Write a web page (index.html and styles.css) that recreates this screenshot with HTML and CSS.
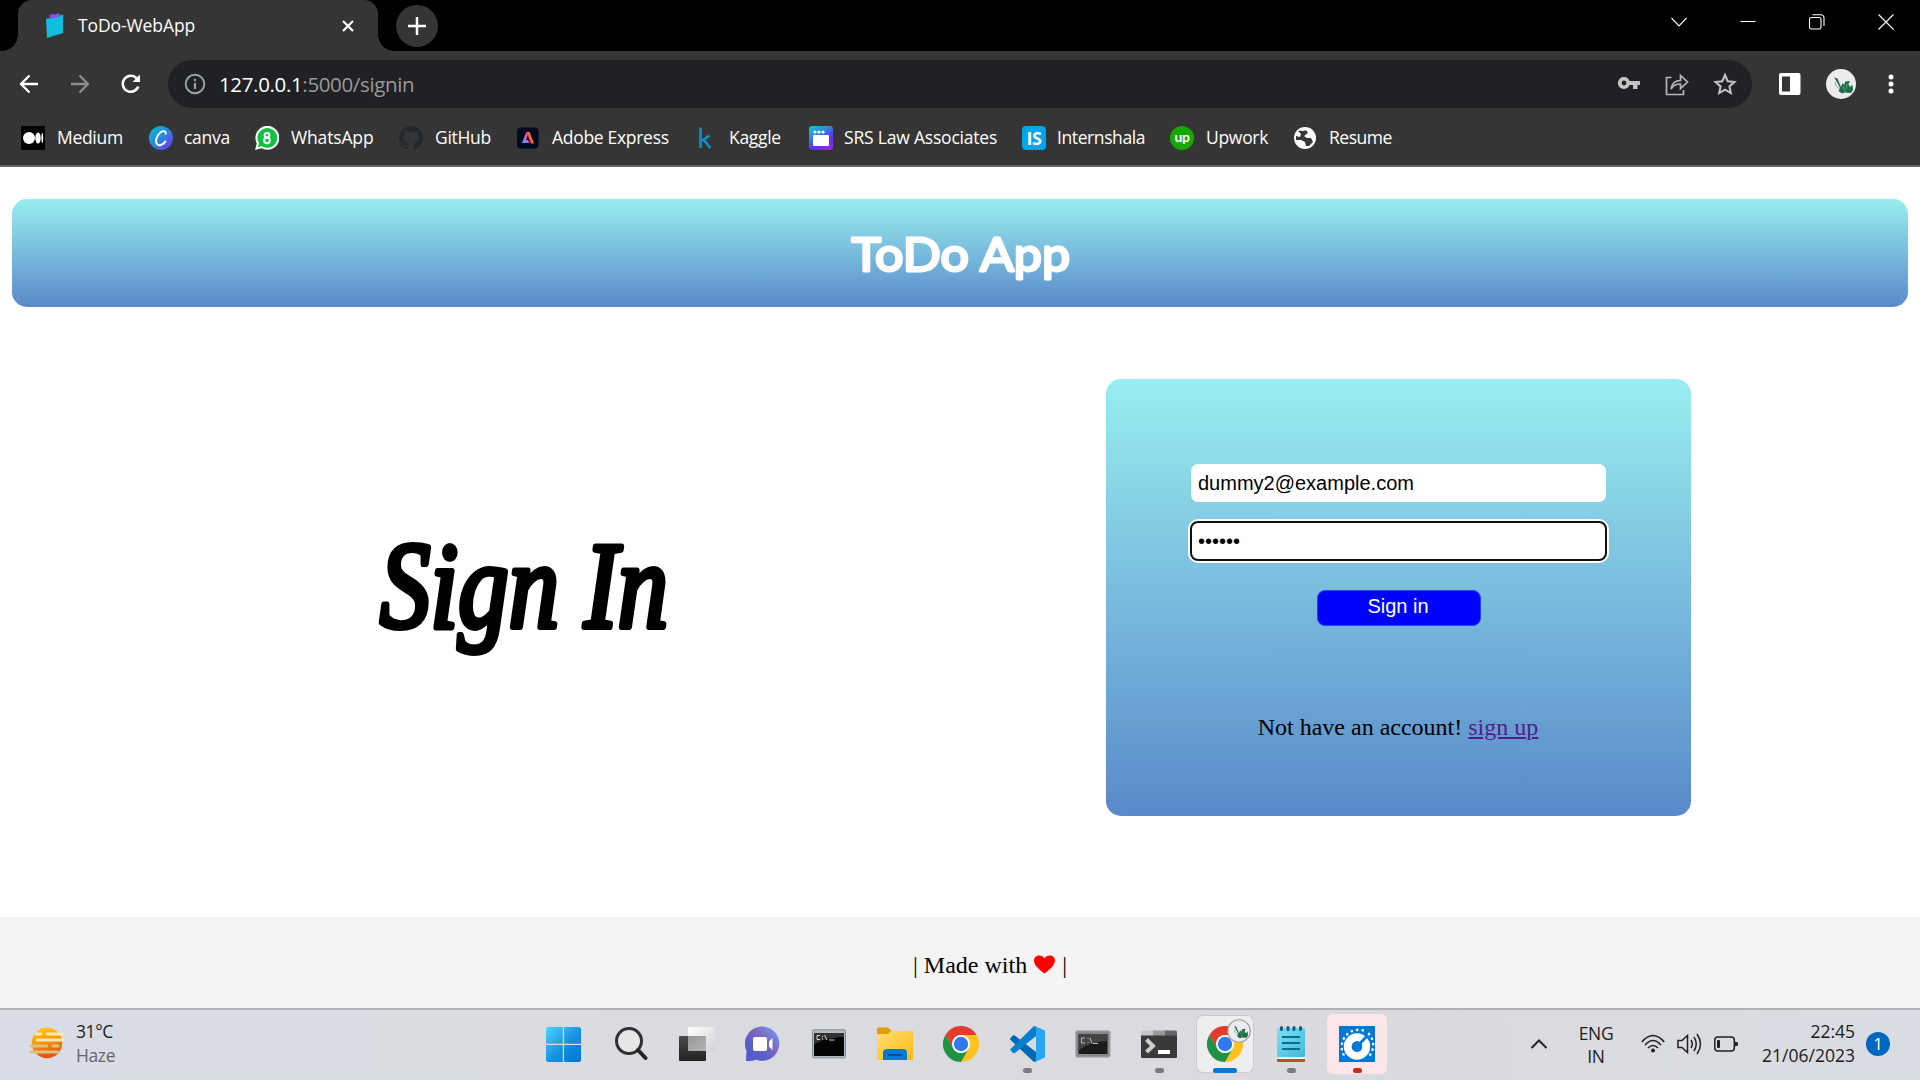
FILE: index.html
```html
<!DOCTYPE html>
<html lang="en">
<head>
<meta charset="utf-8">
<title>ToDo-WebApp</title>
<link rel="stylesheet" href="styles.css">
</head>
<body>
<svg class="defs" width="0" height="0" aria-hidden="true">
  <defs>
    <linearGradient id="canvaG" x1="0" y1="0" x2="1" y2="1"><stop offset="0" stop-color="#00c4cc"/><stop offset=".5" stop-color="#2b85dc"/><stop offset="1" stop-color="#7d2ae8"/></linearGradient>
    <linearGradient id="siteG" x1="0" y1="0" x2=".6" y2="1"><stop offset="0" stop-color="#00d0c8"/><stop offset=".5" stop-color="#3f72e0"/><stop offset=".75" stop-color="#5b31f4"/><stop offset="1" stop-color="#8a2be2"/></linearGradient>
    <linearGradient id="adobeG" x1="0" y1="1" x2="1" y2="0.6"><stop offset="0" stop-color="#3aa8ff"/><stop offset=".4" stop-color="#b06cf0"/><stop offset=".7" stop-color="#ff4040"/><stop offset="1" stop-color="#ffd000"/></linearGradient>
    <linearGradient id="winG" gradientUnits="userSpaceOnUse" x1="0" y1="0" x2="35" y2="35"><stop offset="0" stop-color="#4fd4ff"/><stop offset=".55" stop-color="#1590e2"/><stop offset="1" stop-color="#0074d0"/></linearGradient>
    <linearGradient id="hazeG" x1="0" y1="0" x2=".3" y2="1"><stop offset="0" stop-color="#ffd400"/><stop offset=".5" stop-color="#f99a06"/><stop offset="1" stop-color="#e2560c"/></linearGradient>
    <linearGradient id="chatG" x1="0" y1="1" x2="1" y2="0"><stop offset="0" stop-color="#5059c9"/><stop offset=".35" stop-color="#5b5fc7"/><stop offset=".6" stop-color="#7b68c0"/><stop offset="1" stop-color="#6fa4ff"/></linearGradient>
    <linearGradient id="foldG" x1="0" y1="0" x2="1" y2="1"><stop offset="0" stop-color="#ffdf70"/><stop offset="1" stop-color="#fdb913"/></linearGradient>
    <linearGradient id="noteG" x1="0" y1="0" x2="1" y2="1"><stop offset="0" stop-color="#7fe0f5"/><stop offset="1" stop-color="#3fb8d8"/></linearGradient>
    <linearGradient id="darkG" x1="0" y1="0" x2="0" y2="1"><stop offset="0" stop-color="#4a4a4a"/><stop offset="1" stop-color="#222"/></linearGradient>
    <linearGradient id="sheetG" x1="0" y1="0" x2="1" y2="1"><stop offset="0" stop-color="#fff"/><stop offset="1" stop-color="#d2d2d4"/></linearGradient>
    <linearGradient id="glassG" x1="0" y1="0" x2="1" y2="1"><stop offset="0" stop-color="#777"/><stop offset="1" stop-color="#a8a8a8"/></linearGradient>
    <symbol id="chrome" viewBox="0 0 36 36">
      <path d="M2.4 9A18 18 0 0 1 33.6 9H18a9 9 0 0 0-7.8 4.5L10.2 22.500Z" fill="#e33b2e"/>
      <path d="M33.6 9A18 18 0 0 1 18 36L25.800 22.500A9 9 0 0 0 18 9Z" fill="#fcc31e"/>
      <path d="M2.400 9A18 18 0 0 0 18 36L25.800 22.500A9 9 0 0 1 10.200 22.500Z" fill="#1f9344"/>
      <circle cx="18" cy="18" r="9" fill="#fff"/><circle cx="18" cy="18" r="7.200" fill="#2f7bee"/>
    </symbol>
    <symbol id="dragon" viewBox="0 0 30 30">
      <circle cx="15" cy="15" r="15" fill="#ececec"/>
      <path d="M8 8.500 11.500 9.500 15 18 16.500 14 18.500 16 19 12.500 24 12 22.500 15 24 18 26.500 15.500 27 21 25 24 19 23.500 16 24.500 12.500 22 14 19 10.500 12Z" fill="#226b48"/>
      <path d="M9 15l2 3 3 2M10 12l-1 4" stroke="#8fa59a" fill="none"/>
      <path d="M17 17l2 6M21 15l-1 5" stroke="#49a57c" fill="none"/>
    </symbol>
  </defs>
</svg>

<div class="tabstrip">
  <div class="tab">
    <svg class="tab-icon" width="20" height="26" viewBox="0 0 20 26"><path d="M1 6 18 1.500V20L2 25Z" fill="#10bfe0"/><path d="M4 2.500 7 1 10 1.500 14 0 15 3.500 5 6Z" fill="#8a4de8"/></svg>
    <span class="tab-title">ToDo-WebApp</span>
    <svg class="tab-close" width="12" height="12" viewBox="0 0 12 12"><path d="M1 1 11 11M11 1 1 11" stroke="#fff" stroke-width="2.200"/></svg>
  </div>
  <div class="newtab"><svg width="18" height="18" viewBox="0 0 18 18"><path d="M9 0V18M0 9H18" stroke="#fff" stroke-width="2.500"/></svg></div>
  <div class="window-controls">
    <svg width="16" height="16" viewBox="0 0 16 16"><path d="M.5 4 8 12 15.500 4"/></svg>
    <svg width="16" height="16" viewBox="0 0 16 16"><path d="M.5 7.500H15.500"/></svg>
    <svg width="16" height="16" viewBox="0 0 16 16"><rect x=".5" y="3.500" width="11.500" height="11.500" rx="1.800"/><path d="M3.500 .8H12a3 3 0 0 1 3 3V12"/></svg>
    <svg width="16" height="16" viewBox="0 0 16 16"><path d="M.5 .5 15.500 15.500M15.500 .5 .5 15.500"/></svg>
  </div>
</div>

<div class="toolbar">
  <div class="nav">
    <svg width="20" height="20" viewBox="0 0 20 20"><path d="M19 10H2M10.500 1.500 2 10 10.500 18.500" stroke="#fff"/></svg>
    <svg width="20" height="20" viewBox="0 0 20 20"><path d="M1 10H18M9.500 1.500 18 10 9.500 18.500" stroke="#8c8c8c"/></svg>
    <svg width="20" height="20" viewBox="0 0 20 20"><path d="M17.300 12.500A8 8 0 1 1 15.800 4.500L18 6.800" stroke="#fff" stroke-width="2.500"/><path d="M19 .5V8H11.500Z" fill="#fff"/></svg>
  </div>
  <div class="address">
    <svg width="22" height="22" viewBox="0 0 22 22"><circle cx="11" cy="11" r="9.300" fill="none" stroke="#9aa0a6" stroke-width="2"/><path d="M11 10V16M11 5.800V8.200" stroke="#9aa0a6" stroke-width="2.200"/></svg>
    <span class="url">127.0.0.1<span class="url-rest">:5000/signin</span></span>
    <div class="address-actions">
      <svg width="24" height="24" viewBox="0 0 24 24"><path d="M7 5a6 6 0 1 0 5.500 8H16v4h4.500v-4H23V9H12.500A6 6 0 0 0 7 5Zm0 3.600a2.400 2.400 0 1 1 0 4.800 2.400 2.400 0 0 1 0-4.800Z" fill="#c4c4c4"/></svg>
      <svg width="24" height="24" viewBox="0 0 24 24"><path d="M6.500 5.500H1.500V22.500H18.500V18M6 17C7 11 10 8.500 15.500 8.500V3.500L22.500 10 15.500 16.500V12C11 12 8.500 13 6 17Z" fill="none" stroke="#b4b4b4" stroke-width="1.700"/></svg>
      <svg width="24" height="24" viewBox="0 0 24 24"><path d="M12 3 14.700 9.200 21.500 9.900 16.400 14.400 17.800 21 12 17.600 6.200 21 7.600 14.400 2.500 9.900 9.300 9.200Z" fill="none" stroke="#c4c4c4" stroke-width="2"/></svg>
    </div>
  </div>
  <div class="toolbar-actions">
    <svg width="22" height="22" viewBox="0 0 22 22"><rect width="21.500" height="22" rx="2" fill="#fff"/><rect x="3" y="3.500" width="8" height="15" fill="#353535"/></svg>
    <svg width="30" height="30"><use href="#dragon"/></svg>
    <svg width="6" height="20" viewBox="0 0 6 20"><circle cx="3" cy="3" r="2.500" fill="#fff"/><circle cx="3" cy="10" r="2.500" fill="#fff"/><circle cx="3" cy="17" r="2.500" fill="#fff"/></svg>
  </div>
</div>

<div class="bookmarks">
  <div class="bm bm-medium"><svg viewBox="0 0 24 24"><rect width="24" height="24" rx="1" fill="#000"/><circle cx="8" cy="12" r="6" fill="#fff"/><ellipse cx="17" cy="12" rx="2.700" ry="5.500" fill="#fff"/><ellipse cx="21.300" cy="12" rx=".9" ry="5" fill="#fff"/></svg><span>Medium</span></div>
  <div class="bm bm-canva"><svg viewBox="0 0 24 24"><circle cx="12" cy="12" r="12" fill="url(#canvaG)"/><path d="M16.500 8.500C18 4.500 13 3.500 9.500 8.500 5 15 7.500 20 11.500 19 14 18.500 15.500 17 16.800 14.800" fill="none" stroke="#fff" stroke-width="1.900"/></svg><span>canva</span></div>
  <div class="bm bm-whatsapp"><svg viewBox="0 0 24 24"><path d="M0 24 1.800 17.500A12 12 0 1 1 6.500 22.300Z" fill="#fff"/><path d="M2.800 21.300 4 17.200A9.900 9.900 0 1 1 7 20.200Z" fill="#12c143"/><circle cx="12" cy="9.300" r="2.400" fill="none" stroke="#fff" stroke-width="2"/><circle cx="12" cy="14.400" r="2.800" fill="none" stroke="#fff" stroke-width="2"/></svg><span>WhatsApp</span></div>
  <div class="bm bm-github"><svg viewBox="0 0 16 16"><path fill="#24292e" d="M8 0C3.580 0 0 3.580 0 8c0 3.540 2.290 6.530 5.470 7.590.4.070.55-.17.55-.38 0-.19-.01-.82-.01-1.490-2.010.37-2.530-.49-2.690-.94-.09-.23-.48-.94-.82-1.130-.28-.15-.68-.52-.01-.53.63-.01 1.080.58 1.230.82.72 1.210 1.870.87 2.330.66.07-.52.28-.87.51-1.070-1.780-.2-3.640-.89-3.640-3.950 0-.87.31-1.590.82-2.150-.08-.2-.36-1.020.08-2.120 0 0 .67-.21 2.200.82.64-.18 1.320-.27 2-.27s1.360.09 2 .27c1.530-1.040 2.200-.82 2.200-.82.44 1.100.16 1.920.08 2.120.51.56.82 1.270.82 2.150 0 3.070-1.870 3.750-3.650 3.950.29.25.54.73.54 1.480 0 1.070-.01 1.930-.01 2.200 0 .21.15.46.55.38A8 8 0 0 0 16 8c0-4.420-3.580-8-8-8Z"/></svg><span>GitHub</span></div>
  <div class="bm bm-adobe"><svg viewBox="0 0 24 24"><rect x="1" y="1.500" width="21.500" height="21" rx="4" fill="#000b1d"/><path d="M10.200 6H13.500L18 17.500H14.800L11.800 9.500 10 14H12.200L13.200 17H6Z" fill="url(#adobeG)"/></svg><span>Adobe Express</span></div>
  <div class="bm bm-kaggle"><svg viewBox="0 0 24 24"><path d="M7.500 1.500V22M16.500 9.500 8.500 15M10.500 13.500 17.300 22" fill="none" stroke="#0b8fc4" stroke-width="2.700"/></svg><span>Kaggle</span></div>
  <div class="bm bm-srs"><svg viewBox="0 0 24 24"><rect width="24" height="24" rx="3" fill="url(#siteG)"/><rect x="4" y="9" width="16" height="11" rx="1" fill="#fff"/><circle cx="6" cy="6" r="1.600" fill="#fff"/><circle cx="10" cy="6" r="1.600" fill="#fff"/><circle cx="14" cy="6" r="1.600" fill="#fff"/></svg><span>SRS Law Associates</span></div>
  <div class="bm bm-intern"><div class="is-logo">IS</div><span>Internshala</span></div>
  <div class="bm bm-upwork"><div class="up-logo">up</div><span>Upwork</span></div>
  <div class="bm bm-resume"><svg viewBox="0 0 24 24"><circle cx="12" cy="12" r="11" fill="#fff"/><path d="M5 5C8 4 10 6 13 4L15 7 11 10 14 12 18 12 20 16 16 20 13 20 12 16 8 14 3 14 3 10 7 11 8 8Z" fill="#353535"/></svg><span>Resume</span></div>
</div>

<main class="page">
  <header class="banner">
    <svg width="240" height="100" viewBox="0 0 240 100"><text class="banner-text" x="11.500" y="68" textLength="218.500" lengthAdjust="spacingAndGlyphs">ToDo App</text></svg>
  </header>
  <section class="content">
    <div class="hero">
      <svg width="340" height="260" viewBox="0 0 340 260"><text class="hero-text" x="26" y="160" textLength="288" lengthAdjust="spacingAndGlyphs">Sign In</text></svg>
    </div>
    <form class="card">
      <input class="field" type="text" value="dummy2@example.com">
      <input class="field field-active" type="password" value="secret">
      <button class="submit" type="button">Sign in</button>
      <p class="signup">Not have an account! <a href="#">sign up</a></p>
    </form>
  </section>
  <footer class="footer">
    <span>| Made with</span>
    <svg width="21" height="19" viewBox="0 0 21 19"><path d="M10.500 18.500C6 15 0 10.500 0 5.500 0 0 7.500-1.500 10.500 3.300 13.500-1.500 21 0 21 5.500 21 10.500 15 15 10.500 18.500Z" fill="red"/></svg>
    <span>|</span>
  </footer>
</main>

<div class="taskbar">
  <div class="weather">
    <svg width="36" height="32" viewBox="0 0 36 32"><circle cx="18" cy="16" r="15.200" fill="url(#hazeG)"/><g stroke-width="2.800" stroke-linecap="round"><path d="M7 7H12M18 7H34M8 13H34" stroke="#f7e7b4"/><path d="M2 19H18M24 19H29M2 25H29" stroke="#dfc080"/></g></svg>
    <div class="weather-text"><span>31°C</span><span class="muted">Haze</span></div>
  </div>
  <div class="apps">
    <div class="app app-start"><svg width="35" height="35" viewBox="0 0 35 35"><path d="M1.500 0H16.800V16.800H0V1.500ZM18 0H33.500L35 1.500V16.800H18ZM0 18H16.800V35H1.500L0 33.500ZM18 18H35V33.500L33.500 35H18Z" fill="url(#winG)"/></svg></div>
    <div class="app"><svg width="34" height="36" viewBox="0 0 34 36"><circle cx="15" cy="15" r="12.500" fill="#e6e6e8" stroke="#303030" stroke-width="3"/><path d="M24 24 31.500 32" stroke="#252525" stroke-width="4" stroke-linecap="round"/></svg></div>
    <div class="app"><svg width="36" height="36" viewBox="0 0 36 36"><rect x="0" y="10" width="27" height="25" rx="1" fill="url(#darkG)"/><rect x="9" y="1" width="26.500" height="24" rx="1" fill="url(#sheetG)"/><rect x="9" y="10" width="18" height="15" fill="url(#glassG)" opacity=".75"/></svg></div>
    <div class="app"><svg width="36" height="36" viewBox="0 0 36 36"><path d="M1 35 1.500 25A17.200 17.200 0 1 1 11 33.800Q7 35.500 1 35Z" fill="url(#chatG)"/><rect x="8" y="11" width="14" height="14" rx="2" fill="#fff"/><path d="M24 15.500 27.500 12V24L24 20.500Z" fill="#fff"/></svg></div>
    <div class="app"><svg width="34" height="30" viewBox="0 0 34 30"><rect x=".5" y=".8" width="33" height="28" rx="1.500" fill="#b4bac1" stroke="#858b92"/><rect x="2" y="4" width="30" height="23" fill="#050505"/><path d="M2 16Q10 9 32 8V4H2Z" fill="#333"/><path d="M8 6.500H5V10.500H8M10.500 7V8M10.500 9.500V10.500M12.500 6 15 11M17 11H22.500" fill="none" stroke="#d0d0d0"/></svg></div>
    <div class="app"><svg width="36" height="34" viewBox="0 0 36 34"><path d="M0 2Q0 .5 1.500 .5H11L15 4H36V8H0Z" fill="#df9b08"/><path d="M0 7H11L14 4H35Q36 4 36 5V33H0Z" fill="url(#foldG)"/><path d="M6 33V26Q6 22 10 22H26Q30 22 30 26V33Z" fill="#0878cc"/><path d="M11 28H25" stroke="#064f8c" stroke-width="1.800"/></svg></div>
    <div class="app"><svg width="36" height="36"><use href="#chrome"/></svg></div>
    <div class="app"><svg width="36" height="36" viewBox="0 0 36 36"><path d="M1 12.500 4 9.500Q5 9 6.500 10L27 26V35.500L25 36 1 13.500Z" fill="#0069b4"/><path d="M1 23.500 25 0 27 1V10L6.500 26.500Q5 28 3 26Z" fill="#0580cc"/><path d="M25 0 26.500 .2 36 4.500V31.500L26 36H25L27 34V2Z" fill="#29a5f3"/></svg><i class="dot"></i></div>
    <div class="app"><svg width="36" height="28" viewBox="0 0 36 28"><rect x=".7" y=".7" width="34.500" height="26.500" rx="1.500" fill="#898989" stroke="#b5b5b5"/><rect x="3.500" y="4" width="29" height="20" fill="#1b1b1b"/><path d="M4 4H32V11Q14 12 4 20Z" fill="#444"/><path d="M10 8H6.500V13H10M13 8V9M13 12V13M15 8 17 13.500M18 13.500H23" fill="none" stroke="#bbb"/></svg></div>
    <div class="app"><svg width="36" height="28" viewBox="0 0 36 28"><rect y="1" width="36" height="27" rx="1.500" fill="#393939"/><path d="M0 5.500V2Q0 .5 1.500 .5H12V5.500Z" fill="#c6c6c6"/><path d="M12 .5H24V5.500H12Z" fill="#999"/><path d="M24 .5H35L36 2V5.500H24Z" fill="#666"/><path d="M5.500 9.500 12 16 5.500 22" fill="none" stroke="#cfcfcf" stroke-width="4"/><rect x="17" y="20" width="12" height="4" fill="#fff"/></svg><i class="dot"></i></div>
    <div class="app app-active"><svg width="36" height="36"><use href="#chrome"/></svg><svg class="profile" width="24" height="24" viewBox="-1 -1 32 32"><use href="#dragon" width="30" height="30"/><circle cx="15" cy="15" r="15" fill="none" stroke="#999" stroke-width="1.500"/></svg><i class="dot dot-wide"></i></div>
    <div class="app"><svg width="28" height="36" viewBox="0 0 28 36"><rect y="2" width="28" height="29" rx="1.500" fill="url(#noteG)"/><path d="M0 31H28V36H0Z" fill="#eee"/><path d="M0 33H28V35Q28 36 27 36H1Q0 36 0 35Z" fill="#b85512"/><path d="M5 11H23M5 17H23M5 23H23" stroke="#086d90" stroke-width="1.800"/><path d="M4.500 1.500V3.500M11 1.500V3.500M17 1.500V3.500M23.500 1.500V3.500" stroke="#135d78" stroke-width="3" stroke-linecap="round"/></svg><i class="dot"></i></div>
    <div class="app app-alert"><svg width="36" height="36" viewBox="0 0 36 36"><rect width="36" height="36" fill="#0078d7"/><path d="M4.500 28.500A17 17 0 0 1 28 6M30 8A17 17 0 0 1 31 29" fill="none" stroke="#fff" stroke-width="2.600" stroke-linecap="round" stroke-dasharray=".1 5.400"/><circle cx="18" cy="20.500" r="9.200" fill="none" stroke="#fff" stroke-width="8"/><circle cx="18" cy="20.500" r="5.300" fill="#0078d7"/><path d="M18 20.500 28 10" stroke="#0078d7" stroke-width="2.800"/></svg><i class="dot dot-red"></i></div>
  </div>
  <div class="tray">
    <svg width="18" height="12" viewBox="0 0 18 12"><path d="M1.500 10 9 2.500 16.500 10" fill="none" stroke="#222" stroke-width="2"/></svg>
    <div class="lang"><span>ENG</span><span>IN</span></div>
    <div class="status">
      <svg width="24" height="20" viewBox="0 0 24 20"><g fill="none" stroke="#222" stroke-width="1.600"><path d="M.8 8Q12-5 23.200 8M4 11Q12 2 20 11M7 14Q12 9 17 14"/></g><circle cx="12" cy="16.500" r="2" fill="#222"/></svg>
      <svg width="25" height="22" viewBox="0 0 25 22"><path d="M1 7.500H5L10.500 2.500V19.500L5 14.500H1ZM14 7Q16.500 11 14 15M17 4Q21.500 11 17 18M20 1Q27 11 20 21" fill="none" stroke="#222" stroke-width="1.500"/></svg>
      <svg width="24" height="16" viewBox="0 0 24 16"><rect x=".8" y="1" width="19.500" height="14" rx="3" fill="none" stroke="#222" stroke-width="1.500"/><rect x="3" y="4" width="3" height="8" rx=".8" fill="#222"/><path d="M20.500 5.500 24 6.500V9.500L20.500 10.500Z" fill="#222"/></svg>
    </div>
    <div class="clock"><span>22:45</span><span>21/06/2023</span></div>
    <div class="badge">1</div>
  </div>
</div>
</body>
</html>
```
FILE: styles.css
```css
* { box-sizing: border-box; }

body {
  margin: 0;
  width: 1920px;
  height: 1080px;
  overflow: hidden;
  display: flex;
  flex-direction: column;
  background: #fff;
  font-family: "Open Sans", "Noto Sans", sans-serif;
}

svg { display: block; flex: none; }
.defs { position: absolute; }

/* Browser window */
.tabstrip {
  height: 51px;
  background: #000;
  display: flex;
  align-items: center;
  padding-left: 18px;
}

.tab {
  position: relative;
  width: 360px;
  height: 51px;
  border-radius: 14px 14px 0 0;
  background: #353535;
  display: flex;
  align-items: center;
  padding: 0 24px 0 27px;
}

.tab::before,
.tab::after {
  content: "";
  position: absolute;
  bottom: 0;
  width: 16px;
  height: 16px;
}
.tab::before { left: -16px; background: radial-gradient(circle at 0 0, #000 15.500px, #353535 16px); }
.tab::after { right: -16px; background: radial-gradient(circle at 100% 0, #000 15.500px, #353535 16px); }

.tab-title {
  margin-left: 13px;
  flex: 1;
  padding-bottom: 2px;
  color: #fff;
  font-size: 17.500px;
  letter-spacing: -0.1px;
  white-space: nowrap;
}

.newtab {
  width: 42px;
  height: 42px;
  margin-left: 18px;
  border-radius: 50%;
  background: #353535;
  display: flex;
  align-items: center;
  justify-content: center;
}

.window-controls {
  margin: -8px 26px 0 auto;
  display: flex;
  gap: 53px;
}
.window-controls svg { fill: none; stroke: #fff; stroke-width: 1.100; }

.toolbar {
  height: 66px;
  background: #353535;
  display: flex;
  align-items: center;
  padding-left: 19px;
}

.nav {
  width: 149px;
  display: flex;
  gap: 31px;
  fill: none;
  stroke-width: 2.300;
}

.address {
  width: 1584px;
  height: 48px;
  border-radius: 24px;
  background: #202124;
  display: flex;
  align-items: center;
  padding: 0 15px 0 16px;
}

.url {
  flex: 1;
  margin-left: 13px;
  color: #fff;
  font-size: 20.500px;
  letter-spacing: -0.35px;
}
.url-rest { color: #9a9a9a; }

.address-actions { display: flex; gap: 24px; }

.toolbar-actions {
  flex: 1;
  display: flex;
  align-items: center;
  padding-left: 27px;
}
.toolbar-actions svg:nth-child(2) { margin-left: 25px; }
.toolbar-actions svg:nth-child(3) { margin-left: 32px; }

.bookmarks {
  height: 50px;
  background: #353535;
  border-bottom: 2px solid #666;
  display: flex;
  align-items: flex-start;
  padding: 9px 0 0 21px;
}

.bm {
  display: flex;
  align-items: center;
  gap: 12px;
  height: 24px;
  color: #fff;
  font-size: 17.500px;
  letter-spacing: -0.3px;
  white-space: nowrap;
}
.bm svg { width: 24px; height: 24px; }
.bm span { padding-bottom: 2px; }
.bm-medium { width: 128px; }
.bm-canva { width: 106px; gap: 11px; }
.bm-whatsapp { width: 144px; letter-spacing: -0.15px; }
.bm-github { width: 117px; }
.bm-adobe { width: 177px; }
.bm-kaggle { width: 116px; }
.bm-srs { width: 213px; gap: 11px; letter-spacing: -0.2px; }
.bm-intern { width: 148px; gap: 11px; letter-spacing: -0.4px; }
.bm-upwork { width: 123px; }
.bm-resume { letter-spacing: -0.5px; }

.is-logo,
.up-logo {
  width: 24px;
  height: 24px;
  display: flex;
  align-items: center;
  justify-content: center;
  color: #fff;
}
.is-logo { border-radius: 4px; background: #00a5ec; font: bold 18px "Open Sans", sans-serif; }
.up-logo { border-radius: 50%; background: #14a800; font: bold 14px Lato, sans-serif; padding-bottom: 3px; }

/* Sign-in page */
.page { height: 841px; display: flex; flex-direction: column; }

.banner {
  height: 108px;
  margin: 32px 12px 0;
  border-radius: 15px;
  background: linear-gradient(#97eef0, #5a89ca);
  display: flex;
  align-items: center;
  justify-content: center;
}

.banner-text {
  font: 400 47px Lato, sans-serif;
  fill: #fff;
  stroke: #fff;
  stroke-width: 2.800px;
  stroke-linejoin: round;
}

.content {
  height: 610px;
  padding: 72px 229px 0 354px;
  display: flex;
  justify-content: space-between;
  align-items: flex-start;
}

.hero { height: 436px; display: flex; align-items: center; }

.hero-text {
  font: italic 400 122px "Liberation Serif", cursive;
  fill: #000;
  stroke: #000;
  stroke-width: 6px;
  stroke-linejoin: round;
}

.card {
  width: 585px;
  height: 437px;
  border-radius: 15px;
  background: linear-gradient(#97eef0, #5a89ca);
  display: flex;
  flex-direction: column;
  align-items: center;
  padding-top: 85px;
}

.field {
  width: 415px;
  height: 38px;
  border: 0;
  border-radius: 7px;
  margin: 0 0 20px;
  padding: 1px 7px;
  background: #fff;
  color: #000;
  font: 20px "Liberation Sans", Arial, sans-serif;
}
.field-active { margin-bottom: 30px; outline: 2px solid #101010; outline-offset: -1px; box-shadow: 0 0 0 3px #fff; }

.submit {
  width: 164px;
  height: 36px;
  border: 1px solid #2344f0;
  border-radius: 8px;
  padding: 0 1px 3px 0;
  background: #00f;
  color: #fff;
  font: 20px "Liberation Sans", Arial, sans-serif;
}

.signup {
  margin: 87px 1px 0 0;
  font: 24px/28px "Liberation Serif", "Times New Roman", serif;
  color: #000;
}
.signup a { color: #551a8b; }

.footer {
  flex: 1;
  background: #f4f4f4;
  display: flex;
  align-items: flex-start;
  justify-content: center;
  padding: 34px 0 0 60px;
  gap: 7px;
  font: 24px/28px "Liberation Serif", "Times New Roman", serif;
}
.footer svg { margin-top: 4px; }

/* Desktop taskbar */
.taskbar {
  height: 72px;
  border-top: 2px solid #b0b1b5;
  background: linear-gradient(90deg, #d7dce7, #dadce0 25%, #dadadf 60%, #d9dce2);
  display: flex;
  color: #1c1c1c;
  font-size: 18px;
}

.weather {
  width: 532px;
  padding: 17px 0 0 29px;
  display: flex;
  gap: 11px;
}
.weather-text {
  display: flex;
  flex-direction: column;
  margin-top: -8px;
  font-size: 17.500px;
  line-height: 24px;
  letter-spacing: -0.4px;
}
.muted { color: #666; }

.apps { display: flex; }
.app {
  position: relative;
  width: 66px;
  height: 68px;
  display: flex;
  align-items: center;
  justify-content: center;
}
.app > svg { position: relative; }
.app-start { padding-right: 3px; }

.app-active::before,
.app-alert::before {
  content: "";
  position: absolute;
  left: 5px;
  top: 6px;
  width: 56px;
  height: 56px;
  border-radius: 6px;
  background: #eeeef0;
  box-shadow: 0 0 0 1px #ccccd0;
}
.app-alert::before {
  left: 3px;
  top: 4px;
  width: 60px;
  height: 60px;
  background: #fde6e8;
  box-shadow: none;
}
.app .profile { position: absolute; left: 35px; top: 9px; }

.dot {
  position: absolute;
  left: 29px;
  top: 58px;
  width: 9px;
  height: 5px;
  border-radius: 3px;
  background: #7a7a7c;
}
.dot-wide { left: 21px; width: 24px; background: #0078d7; }
.dot-red { background: #c42b1c; }

.tray { flex: 1; display: flex; padding-left: 140px; }
.tray > svg { margin-top: 28px; }

.lang,
.clock {
  display: flex;
  flex-direction: column;
  font-size: 17.500px;
}
.lang { width: 50px; margin: 12px 0 0 23px; align-items: center; line-height: 23px; letter-spacing: -0.4px; }
.status { display: flex; gap: 12px; align-items: center; height: 68px; margin-left: 20px; }
.clock { width: 117px; margin-top: 9px; align-items: flex-end; line-height: 24px; letter-spacing: 0; }
.badge {
  width: 24px;
  height: 24px;
  margin: 22px 0 0 11px;
  border-radius: 50%;
  background: #0067c0;
  color: #fff;
  font-size: 17px;
  line-height: 23px;
  text-align: center;
}
```
